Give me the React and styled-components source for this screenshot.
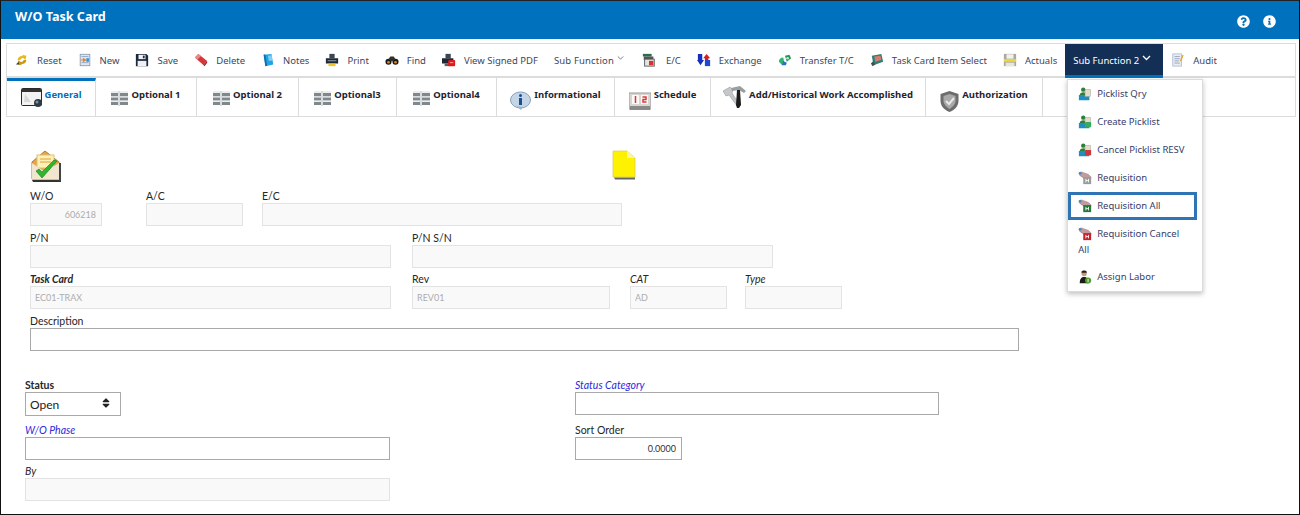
import React from "react";
import styled, { createGlobalStyle } from "styled-components";
import { FaQuestionCircle, FaInfoCircle, FaSort } from "react-icons/fa";

const GlobalStyle = createGlobalStyle`
  html, body { margin: 0; padding: 0; background: #fff; }
  body { font-family: "Noto Sans", "Open Sans", Arial, sans-serif; }
  * { box-sizing: border-box; }
`;

const Page = styled.div`
  width: 1300px;
  height: 515px;
  border: 1px solid #111;
  border-top-color: #222;
  overflow: hidden;
  background: #fff;
`;

const Header = styled.header`
  height: 38px;
  background: #0071bc;
  color: #fff;
  display: flex;
  justify-content: space-between;
  padding: 8px 23px 0 14px;
`;

const Title = styled.h1`
  margin: 0;
  font-size: 12.6px;
  line-height: 16px;
  font-weight: 700;
`;

const HeaderIcons = styled.div`
  display: flex;
  gap: 13px;
  padding-top: 6px;
  font-size: 13px;
`;

const Body = styled.div`
  padding: 4px 3px 0 5px;
`;

const Toolbar = styled.nav`
  height: 35px;
  display: flex;
  align-items: stretch;
  border: 1px solid #dcdcdc;
  border-bottom-width: 2px;
`;

const ToolItem = styled.div`
  position: relative;
  display: flex;
  align-items: center;
  gap: ${(p) => p.$gap || 8}px;
  padding: 0 ${(p) => p.$right || 8}px 0 8px;
  font-size: 9.5px;
  letter-spacing: ${(p) => p.$spacing || 0}px;
  color: #3d4660;
  white-space: nowrap;
`;

const ActiveItem = styled(ToolItem)`
  background: #132f55;
  color: #fff;
  border-bottom: 3px solid #0071bc;
  padding: 1px 12px 0 8px;
  margin-bottom: -2px;
  gap: 3px;
`;

const Chevron = styled.svg`
  width: ${(p) => p.$w}px;
  height: 6px;
  margin-top: -5px;
  fill: none;
  stroke: currentColor;
  stroke-width: ${(p) => (p.$w > 8 ? 1.3 : 0.9)};
`;

const Menu = styled.ul`
  position: absolute;
  top: 100%;
  left: 2px;
  width: 136px;
  margin: 4px 0 0;
  padding: 0 5px 0 0;
  list-style: none;
  background: #fff;
  border: 1px solid #dcdcdc;
  box-shadow: 0 2px 5px rgba(0, 0, 0, 0.25);
  white-space: normal;
  letter-spacing: 0;
  z-index: 5;
`;

const MenuItem = styled.li`
  padding: ${(p) => (p.$focused ? "3px 7px 0" : "6px 10px")};
  height: ${(p) => (p.$wrap ? "43px" : "28px")};
  line-height: 16px;
  font-size: 9.5px;
  color: #35406a;
  border: ${(p) => (p.$focused ? "3px solid #2f74b5" : "0 none")};
  svg {
    width: 14px;
    height: 14px;
    vertical-align: middle;
    margin-right: 5px;
  }
`;

const Tabs = styled.div`
  height: 39px;
  display: flex;
  border-left: 1px solid #dcdcdc;
  border-right: 1px solid #dcdcdc;
  border-bottom: 1px solid #dcdcdc;
`;

const Tab = styled.div`
  width: ${(p) => p.$w}px;
  display: flex;
  justify-content: center;
  gap: ${(p) => (p.$active ? 2 : 3)}px;
  padding-top: ${(p) => (p.$active ? 8 : 11)}px;
  border-right: 1px solid #dcdcdc;
  border-top: ${(p) => (p.$active ? "3px solid #0071bc" : "0 none")};
  font-size: 9.5px;
  line-height: 12px;
  font-weight: 700;
  color: ${(p) => (p.$active ? "#0071bc" : "#1f2430")};
  white-space: nowrap;
  svg {
    margin-top: ${(p) => (p.$active ? -1 : p.$lift ? -3 : 2)}px;
    flex: none;
  }
`;

const Form = styled.main`
  padding: 33px 0 0 24px;
`;

const NoticeRow = styled.div`
  display: flex;
  height: 39px;
`;

const NoteSlot = styled.div`
  margin-left: 549px;
`;

const FieldGroup = styled.div`
  display: flex;
  flex-direction: column;
  gap: 4.5px;
`;

const FieldRow = styled.div`
  display: flex;
`;

const Field = styled.div`
  width: ${(p) => p.$w}px;
  margin-right: ${(p) => p.$gap || 0}px;
`;

const Label = styled.label`
  display: block;
  height: 14px;
  font-family: Lato, "Noto Sans", sans-serif;
  font-size: 10.5px;
  line-height: 14px;
  font-style: ${(p) => (p.$italic ? "italic" : "normal")};
  font-weight: ${(p) => (p.$bold ? 700 : 400)};
  color: ${(p) => (p.$link ? "#2a2ae0" : "#262626")};
`;

const Input = styled.input`
  display: block;
  width: 100%;
  height: 23px;
  padding: 0 5px 0 4px;
  border: 1px solid ${(p) => (p.disabled ? "#e3e3e3" : "#a9a9a9")};
  background: ${(p) => (p.disabled ? "#f9f9f9" : "#fff")};
  font-family: Lato, "Noto Sans", sans-serif;
  font-size: 9px;
  color: #333;
  text-align: ${(p) => (p.$right ? "right" : "left")};
  outline: none;
  &:disabled {
    color: #adadad;
    -webkit-text-fill-color: #adadad;
    opacity: 1;
  }
`;

const StatusGrid = styled.div`
  display: grid;
  grid-template-columns: 550px 364px;
  row-gap: 4px;
  margin: 27px 0 0 -5px;
`;

const SelectBox = styled.div`
  width: 96px;
  height: 24px;
  margin-bottom: 3px;
  display: flex;
  align-items: center;
  justify-content: space-between;
  padding: 1px 8px 0 4px;
  border: 1px solid #a9a9a9;
  font-family: Lato, "Noto Sans", sans-serif;
  font-size: 12px;
  color: #222;
  svg {
    font-size: 12px;
    margin-top: -3px;
  }
`;

const Svg = ({ size = 14, h, vb = "0 0 16 16", children }) => (
  <svg width={size} height={h || size} viewBox={vb}>
    {children}
  </svg>
);

const ResetIcon = () => (
  <Svg>
    <path d="M3 8c0-3 3-5 6-4.500L8 2l5 1-1 5-1.500-1.500C9 5 7 6 6 8z" fill="#e8b820" />
    <path d="M13 8c0 3-3 5-6 4.500L8 14l-5-1 1-5 1.500 1.500C7 11 9 10 10 8z" fill="#c99a10" />
    <path d="M1 13l3-3 1 3z" fill="#444" />
  </Svg>
);
const NewIcon = () => (
  <Svg>
    <rect x="2.500" y="1.500" width="11" height="13" fill="#dfe6f0" stroke="#8b99b0" />
    <path d="M4 4h8M4 11h8" stroke="#8fa7c8" />
    <path d="M3 8h5M6 6l3 2-3 2z" fill="#f08020" stroke="#f08020" />
    <rect x="9.500" y="6" width="3" height="4" fill="#3a90d8" />
  </Svg>
);
const SaveIcon = () => (
  <Svg>
    <path d="M1 1h12l2 2v12H1z" fill="#1c2a40" />
    <rect x="4" y="2" width="8" height="5" fill="#f2f2f2" />
    <rect x="9" y="3" width="2" height="3" fill="#1c2a40" />
    <rect x="3" y="9" width="10" height="6" fill="#eef0f4" />
  </Svg>
);
const DeleteIcon = () => (
  <Svg>
    <path d="M1 5l4-4 10 8-4 5z" fill="#d6363a" />
    <path d="M1 5l4-4 3 2.500-4 4z" fill="#e88a8a" />
    <path d="M11 14l4-5 0 2-3 4z" fill="#8c1a1e" />
  </Svg>
);
const NotesIcon = () => (
  <Svg>
    <path d="M3 2l9-1 2 12-9 2z" fill="#23a2e4" />
    <path d="M3 2l2-.300 2 13-2 .300z" fill="#0f6fa8" />
    <path d="M8 3l4-.500 1 6-4 .500z" fill="#7fd0f5" />
  </Svg>
);
const PrintIcon = () => (
  <Svg>
    <rect x="5" y="1" width="6" height="5" fill="#3b4654" />
    <path d="M1 6h14v6H1z" fill="#1e2733" />
    <rect x="3" y="8" width="10" height="1.500" fill="#75818f" />
    <rect x="4" y="12" width="8" height="3" fill="#f2c520" />
  </Svg>
);
const FindIcon = () => (
  <Svg>
    <circle cx="4" cy="10" r="3.500" fill="#1a1a1a" />
    <circle cx="12" cy="10" r="3.500" fill="#1a1a1a" />
    <path d="M4 7l2-3h4l2 3-3 2H7z" fill="#33302a" />
    <circle cx="4" cy="10.500" r="1.500" fill="#d98a2c" />
    <circle cx="12" cy="10.500" r="1.500" fill="#d98a2c" />
  </Svg>
);
const PdfIcon = () => (
  <Svg>
    <rect x="4" y="1" width="6" height="5" fill="#3b4654" />
    <path d="M0 6h13v6H0z" fill="#1e2733" />
    <rect x="3" y="12" width="6" height="3" fill="#5a5f68" />
    <rect x="7" y="8" width="8" height="7" rx="1" fill="#e01a1a" />
    <path d="M9 11h4" stroke="#f9b0b0" />
  </Svg>
);
const EcIcon = () => (
  <Svg>
    <rect x="1" y="1" width="10" height="3" fill="#2f6b4a" />
    <rect x="2" y="4" width="11" height="4" fill="#555" />
    <rect x="3" y="7" width="11" height="8" fill="#e4e4e4" stroke="#555" />
    <rect x="8" y="9" width="5" height="5" fill="#d93030" />
  </Svg>
);
const ExchangeIcon = () => (
  <Svg>
    <path d="M1 1h5v7h2l-4 6-4-6h1z" fill="#1330c0" />
    <path d="M11 1l4 5h-2v2h-4V6H7z" fill="#d82020" />
    <path d="M9 8h6v7H9z" fill="#1c49d0" />
  </Svg>
);
const TransferIcon = () => (
  <Svg>
    <path d="M1 10c0-3 2-5 5-5l1 5-3 3z" fill="#2fb56c" />
    <path d="M8 3l5-1 2 4-5 4z" fill="#1f9a58" />
    <path d="M6 9l4 2-1 3H4z" fill="#2a6fd0" />
    <circle cx="11" cy="6" r="1.500" fill="#bfe8d0" />
  </Svg>
);
const CardSelectIcon = () => (
  <Svg>
    <path d="M2 3l11-2 2 9-11 4z" fill="#2d8075" />
    <path d="M5 4l7-1 1 5-7 2z" fill="#d97a70" />
    <path d="M1 12l3-3 2 4-3 2z" fill="#41505a" />
  </Svg>
);
const ActualsIcon = () => (
  <Svg>
    <path d="M1 1h14v14H1z" fill="#a9a9a0" />
    <rect x="4" y="1.500" width="8" height="5" fill="#f2f2ea" />
    <rect x="1" y="7" width="14" height="3" fill="#f0d838" />
    <rect x="3" y="11" width="10" height="4" fill="#e6e6da" />
  </Svg>
);
const AuditIcon = () => (
  <Svg>
    <rect x="2" y="1" width="10" height="14" fill="#e6ebf4" stroke="#b3bdcf" />
    <path d="M4 4h6M4 6.500h6M4 9h5M4 11.500h6" stroke="#94a3bd" />
    <path d="M10 9l3-7 1.500 .6-3 7z" fill="#e8a33a" />
  </Svg>
);
const GeneralIcon = () => (
  <Svg size={22} h={19} vb="0 0 22 19">
    <rect x=".500" y=".500" width="20" height="17" rx="1" fill="#f3f3f3" stroke="#2a2a2a" />
    <rect x="1" y="1" width="19" height="3" fill="#333" />
    <path d="M4 6l6 8H3z" fill="#d9d9d9" />
    <circle cx="17" cy="15" r="4" fill="#2e3a44" />
    <circle cx="16" cy="14" r="1.500" fill="#7d8d99" />
  </Svg>
);
const GridIcon = () => (
  <Svg size={17} h={15} vb="0 0 17 15">
    <g fill="#80888b">
      <rect x="0" y="2" width="7" height="3" />
      <rect x="9" y="2" width="8" height="3" />
      <rect x="0" y="6.500" width="7" height="3" />
      <rect x="9" y="6.500" width="8" height="3" />
      <rect x="0" y="11" width="7" height="3" />
      <rect x="9" y="11" width="8" height="3" />
    </g>
    <path d="M0 1h7M9 1h8M0 5.500h7M9 5.500h8M0 10h7M9 10h8M7.500 0v15M8.500 0v15" stroke="#cfd3d5" strokeWidth=".8" />
  </Svg>
);
const InfoBubbleIcon = () => (
  <Svg size={21} h={19} vb="0 0 21 19">
    <ellipse cx="10.500" cy="9" rx="10" ry="8" fill="#c4d5e8" stroke="#8aa0bb" />
    <path d="M6 15l5 4 2-3z" fill="#9fb4cc" />
    <circle cx="10.500" cy="4.500" r="1.500" fill="#1c4f8e" />
    <rect x="9" y="7" width="3" height="7" fill="#1c4f8e" />
  </Svg>
);
const ScheduleIcon = () => (
  <Svg size={22} h={20} vb="0 0 22 20">
    <path d="M0 2h22v16H0z" fill="#d9d6d2" stroke="#9a9a9a" />
    <rect x="3" y="4" width="7" height="9" fill="#fafafa" />
    <rect x="12" y="4" width="7" height="9" fill="#fafafa" />
    <path d="M6.500 5v7M13.500 6h3.500v2.500h-3V11h3.500" fill="none" stroke="#d83a3a" strokeWidth="1.500" />
    <rect x="1" y="15" width="20" height="4" fill="#8a8a8a" />
  </Svg>
);
const ToolsIcon = () => (
  <Svg size={23} h={22} vb="0 0 23 22">
    <path d="M0 5l7-4 3 3-1 3 7 11-2 2-8-11-3 1z" fill="#c4c8cb" stroke="#8a8e91" strokeWidth=".5" />
    <path d="M8 2l9-2 6 5-2 2-5-3-7 1z" fill="#9a9ea1" />
    <path d="M14 4h3l1 15-2 3h-2l-1-3z" fill="#1c1c1c" />
  </Svg>
);
const ShieldIcon = () => (
  <Svg size={19} h={21} vb="0 0 19 21">
    <path d="M9.500 0l9 3v7c0 5-4 9-9 11-5-2-9-6-9-11V3z" fill="#6d6d6d" />
    <path d="M9.500 3l6 2v5c0 3-3 6-6 8-3-2-6-5-6-8V5z" fill="#a9a9a9" />
    <path d="M6 10l3 3 5-6" fill="none" stroke="#e8e8e8" strokeWidth="2" />
  </Svg>
);
const PersonBox = ({ badge }) => (
  <Svg>
    <circle cx="6" cy="3" r="2.500" fill="#2f7d3a" />
    <path d="M2 9c0-2 2-3 4-3s4 1 4 3z" fill="#2f7d3a" />
    <path d="M1 9h9l3 1v5H1z" fill="#1f8fc0" />
    <rect x="8" y="3" width="6" height="8" fill="#e4dcc8" stroke="#8d8d80" strokeWidth=".5" />
    {badge && <rect x="8" y="8" width="7" height="6" rx="1" fill={badge} />}
  </Svg>
);
const HandBox = ({ color }) => (
  <Svg>
    <path d="M1 2l3-1 8 3 3 3-1 3-6-1-6-4z" fill="#c49a9a" stroke="#8a6a6a" strokeWidth=".5" />
    <circle cx="2.500" cy="2.500" r="1.500" fill="#3f87d8" />
    <rect x="6" y="7" width="9" height="8" fill={color} />
    <path d="M9 9v4M12 9v4M9 11h3" stroke="#fff" />
  </Svg>
);
const LaborIcon = () => (
  <Svg>
    <circle cx="7" cy="4" r="3" fill="#c59a78" />
    <path d="M4 2c1-2 5-2 6 0v1H4z" fill="#222" />
    <path d="M2 15c0-5 2-7 5-7s5 2 5 7z" fill="#1c1c1c" />
    <circle cx="11.500" cy="12" r="3.500" fill="#4c9a2a" />
    <rect x="11" y="10" width="1" height="4" fill="#fff" />
  </Svg>
);
const EnvelopeIcon = () => (
  <Svg size={32} h={32} vb="0 0 32 32">
    <path d="M2 12L15 1l14 11v17H2z" fill="#e8a24a" stroke="#b57a2a" />
    <rect x="7" y="5" width="17" height="13" fill="#fdf1b8" stroke="#d8c47a" />
    <path d="M10 9h11M10 12h11" stroke="#e0a030" />
    <path d="M2 13l13 9 14-9v16H2z" fill="#efe5d0" />
    <path d="M2 29l13-10 14 10z" fill="#f5e7cc" />
    <path d="M6 21l6 7L27 11l-3-1-12 12-3-3z" fill="#2fb52f" stroke="#128012" strokeWidth=".6" />
    <path d="M2 30h27l2 1v1H3z" fill="#333" />
    <path d="M29 13h2v18h-2z" fill="#444" />
  </Svg>
);
const NoteIcon = () => (
  <Svg size={26} h={30} vb="0 0 26 30">
    <path d="M2 1h14l8 7v19H2z" fill="#fff200" stroke="#d8cf60" strokeWidth=".8" />
    <path d="M16 1v7h8z" fill="#fff89a" />
    <path d="M3 27.500h21v2H4z" fill="#666" />
  </Svg>
);

const tools = [
  ["Reset", <ResetIcon />],
  ["New", <NewIcon />],
  ["Save", <SaveIcon />],
  ["Delete", <DeleteIcon />],
  ["Notes", <NotesIcon />],
  ["Print", <PrintIcon />],
  ["Find", <FindIcon />],
  ["View Signed PDF", <PdfIcon />],
];

const tools2 = [
  ["E/C", <EcIcon />, 10],
  ["Exchange", <ExchangeIcon />],
  ["Transfer T/C", <TransferIcon />],
  ["Task Card Item Select", <CardSelectIcon />],
  ["Actuals", <ActualsIcon />],
];

const tabs = [
  ["Optional 1", <GridIcon />, 101],
  ["Optional 2", <GridIcon />, 102],
  ["Optional3", <GridIcon />, 98],
  ["Optional4", <GridIcon />, 100],
  ["Informational", <InfoBubbleIcon />, 118],
  ["Schedule", <ScheduleIcon />, 96],
  ["Add/Historical Work Accomplished", <ToolsIcon />, 215, true],
  ["Authorization", <ShieldIcon />, 117],
];

const menu = [
  ["Picklist Qry", <PersonBox />],
  ["Create Picklist", <PersonBox badge="#3aa860" />],
  ["Cancel Picklist RESV", <PersonBox badge="#c8383c" />],
  ["Requisition", <HandBox color="#9a9a9a" />],
];

export default function App() {
  return (
    <Page>
      <GlobalStyle />
      <Header>
        <Title>W/O Task Card</Title>
        <HeaderIcons>
          <FaQuestionCircle />
          <FaInfoCircle />
        </HeaderIcons>
      </Header>
      <Body>
        <Toolbar>
          {tools.map(([name, icon]) => (
            <ToolItem key={name}>
              {icon}
              {name}
            </ToolItem>
          ))}
          <ToolItem $gap={3} $right={10} $spacing={0.16}>
            Sub Function
            <Chevron $w={7} viewBox="0 0 9 6">
              <path d="M1 1l3.500 3.500L8 1" />
            </Chevron>
          </ToolItem>
          {tools2.map(([name, icon, gap]) => (
            <ToolItem key={name} $gap={gap}>
              {icon}
              {name}
            </ToolItem>
          ))}
          <ActiveItem>
            Sub Function 2
            <Chevron $w={9} viewBox="0 0 9 6">
              <path d="M1 1l3.500 3.500L8 1" />
            </Chevron>
            <Menu>
              {menu.map(([name, icon]) => (
                <MenuItem key={name}>
                  {icon}
                  {name}
                </MenuItem>
              ))}
              <MenuItem $focused>
                <HandBox color="#1f7a3a" />
                Requisition All
              </MenuItem>
              <MenuItem $wrap>
                <HandBox color="#c8202c" />
                Requisition Cancel All
              </MenuItem>
              <MenuItem>
                <LaborIcon />
                Assign Labor
              </MenuItem>
            </Menu>
          </ActiveItem>
          <ToolItem>
            <AuditIcon />
            Audit
          </ToolItem>
        </Toolbar>
        <Tabs>
          <Tab $active $w={89}>
            <GeneralIcon />
            General
          </Tab>
          {tabs.map(([name, icon, w, lift]) => (
            <Tab key={name} $w={w} $lift={lift}>
              {icon}
              {name}
            </Tab>
          ))}
        </Tabs>
        <Form>
          <NoticeRow>
            <EnvelopeIcon />
            <NoteSlot>
              <NoteIcon />
            </NoteSlot>
          </NoticeRow>
          <FieldGroup>
            <FieldRow>
              <Field $w={72} $gap={44}>
                <Label>W/O</Label>
                <Input disabled $right defaultValue="606218" />
              </Field>
              <Field $w={97} $gap={19}>
                <Label>A/C</Label>
                <Input disabled />
              </Field>
              <Field $w={360}>
                <Label>E/C</Label>
                <Input disabled />
              </Field>
            </FieldRow>
            <FieldRow>
              <Field $w={361} $gap={21}>
                <Label>P/N</Label>
                <Input disabled />
              </Field>
              <Field $w={361}>
                <Label>P/N S/N</Label>
                <Input disabled />
              </Field>
            </FieldRow>
            <FieldRow>
              <Field $w={361} $gap={21}>
                <Label $italic $bold>Task Card</Label>
                <Input disabled defaultValue="EC01-TRAX" />
              </Field>
              <Field $w={198} $gap={20}>
                <Label>Rev</Label>
                <Input disabled defaultValue="REV01" />
              </Field>
              <Field $w={97} $gap={18}>
                <Label $italic>CAT</Label>
                <Input disabled defaultValue="AD" />
              </Field>
              <Field $w={97}>
                <Label $italic>Type</Label>
                <Input disabled />
              </Field>
            </FieldRow>
            <FieldRow>
              <Field $w={989}>
                <Label>Description</Label>
                <Input />
              </Field>
            </FieldRow>
          </FieldGroup>
          <StatusGrid>
            <Field $w={365}>
              <Label $bold>Status</Label>
              <SelectBox>
                Open
                <FaSort />
              </SelectBox>
            </Field>
            <Field $w={364}>
              <Label $italic $link>Status Category</Label>
              <Input />
            </Field>
            <Field $w={365}>
              <Label $italic $link>W/O Phase</Label>
              <Input />
            </Field>
            <Field $w={107}>
              <Label>Sort Order</Label>
              <Input $right defaultValue="0.0000" />
            </Field>
            <Field $w={365}>
              <Label $italic>By</Label>
              <Input disabled />
            </Field>
          </StatusGrid>
        </Form>
      </Body>
    </Page>
  );
}
